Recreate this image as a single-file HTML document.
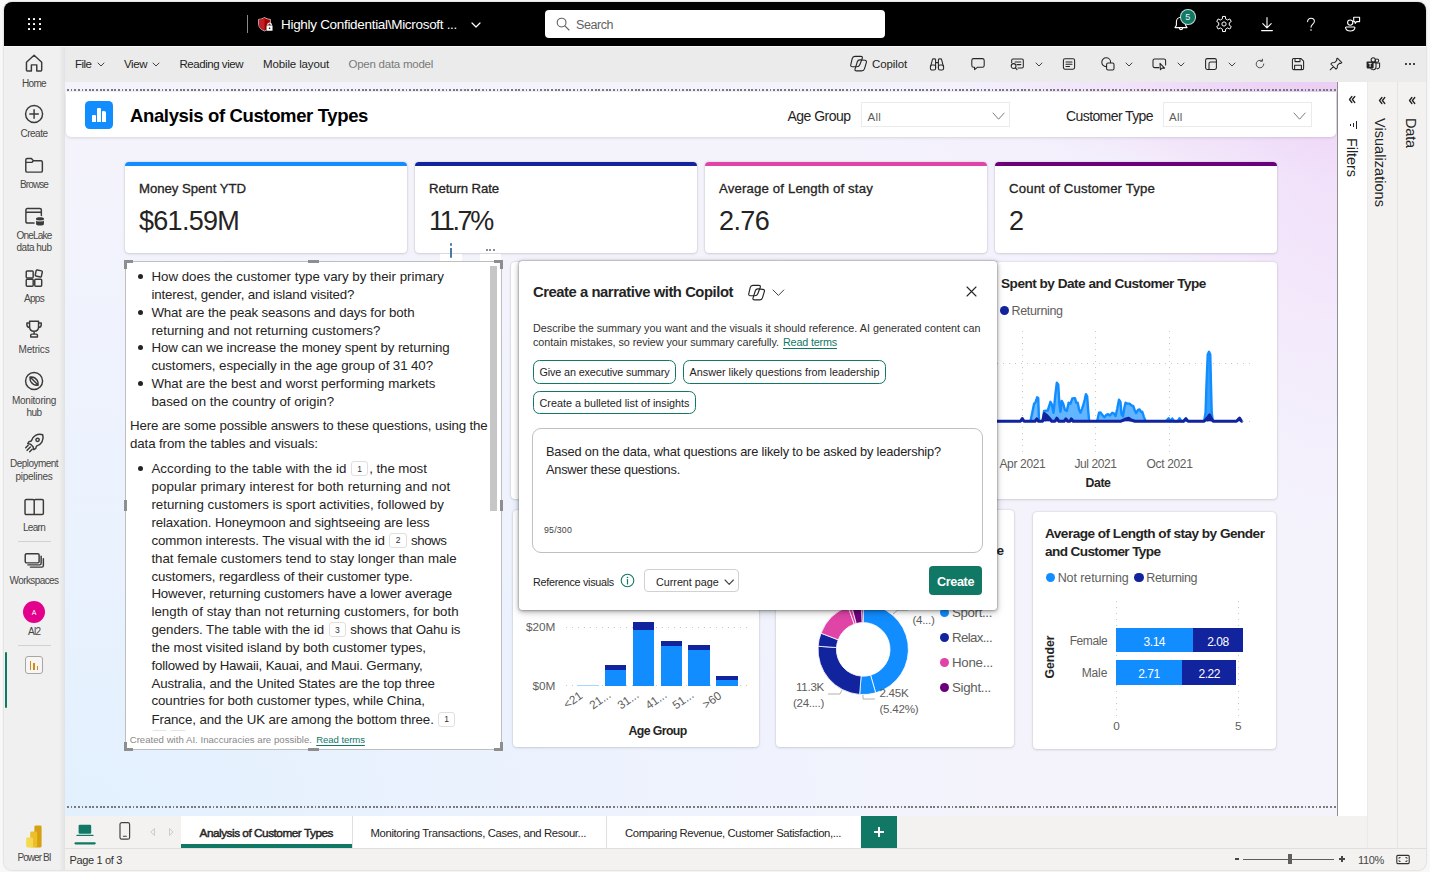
<!DOCTYPE html>
<html><head><meta charset="utf-8"><title>Power BI</title>
<style>
*{box-sizing:border-box;margin:0;padding:0}
html,body{width:1430px;height:872px;overflow:hidden;background:#f8f8f8;font-family:"Liberation Sans",sans-serif;color:#252423}
div,svg{position:absolute}
.t{white-space:nowrap;overflow:visible}
.card{background:#fff;border-radius:4px;box-shadow:0 0 2px rgba(0,0,0,.18),0 1px 3px rgba(0,0,0,.10)}
svg{overflow:visible}
.ic{fill:none;stroke:#242424;stroke-width:1.1;stroke-linecap:round;stroke-linejoin:round}
</style></head><body>
<div style="left:4.0px;top:2.0px;width:1422.3px;height:868.0px;background:#f3f2f1;border-radius:8px;box-shadow:0 0 2px rgba(0,0,0,.3)"></div>
<div style="left:4.0px;top:2.0px;width:1422.3px;height:44.0px;background:#000;border-radius:8px 8px 0 0"></div>
<div style="left:4.0px;top:46.0px;width:61.0px;height:824.0px;background:#f0f0f0;border-radius:0 0 0 8px"></div>
<div style="left:65.0px;top:46.0px;width:1361.3px;height:36.0px;background:#ebebeb;"></div>
<div style="left:59.0px;top:46.0px;width:6.0px;height:824.0px;background:linear-gradient(to right,rgba(0,0,0,0),rgba(0,0,0,.06));"></div>
<div style="left:65.0px;top:82.0px;width:1273.0px;height:734.0px;background:#f5f4fd;background:radial-gradient(ellipse 30% 13% at 100% 0%,rgba(234,205,244,.95) 0%,rgba(238,214,247,.5) 50%,rgba(245,244,253,0) 100%),radial-gradient(ellipse 17% 62% at 100% 0%,rgba(240,219,249,1) 0%,rgba(242,228,250,.65) 50%,rgba(245,244,253,0) 100%),radial-gradient(ellipse 40% 40% at 100% 0%,rgba(243,232,251,.8) 0%,rgba(245,244,253,0) 100%),radial-gradient(ellipse 75% 90% at 0% 100%,rgba(226,240,254,1) 0%,rgba(232,242,254,.8) 45%,rgba(245,244,253,0) 100%),#f4f3fc"></div>
<div style="left:4.0px;top:46.0px;width:1422.3px;height:1.0px;background:#fafafa;"></div>
<div style="left:67.0px;top:89.3px;width:1270.0px;height:1.8px;background:transparent;background-image:repeating-linear-gradient(to right,#7a7a7a 0,#7a7a7a 1.82px,transparent 1.82px,transparent 3.64px)"></div>
<div style="left:67.0px;top:806.4px;width:1270.0px;height:1.8px;background:transparent;background-image:repeating-linear-gradient(to right,#7a7a7a 0,#7a7a7a 1.82px,transparent 1.82px,transparent 3.64px)"></div>
<div style="left:1336.8px;top:82.0px;width:1.2px;height:734.0px;background:#8f8f8f;"></div>
<div style="left:1338.0px;top:82.0px;width:29.0px;height:734.0px;background:#fff;"></div>
<div style="left:1367.0px;top:82.0px;width:30.0px;height:766.0px;background:#f3f2f1;"></div>
<div style="left:1396.5px;top:82.0px;width:1.0px;height:766.0px;background:#e6e4e2;"></div>
<div style="left:1397.5px;top:82.0px;width:28.8px;height:766.0px;background:#f3f2f1;"></div>
<div style="left:1367.0px;top:82.0px;width:1.0px;height:766.0px;background:#eceae8;"></div>
<div style="left:65.0px;top:816.0px;width:1302.0px;height:32.0px;background:#f3f2f1;"></div>
<div style="left:65.0px;top:848.0px;width:1361.3px;height:1.0px;background:#e1dfdd;"></div>
<div style="left:65.0px;top:849.0px;width:1361.3px;height:21.0px;background:#f3f2f1;border-radius:0 0 8px 0"></div>
<div style="left:28.0px;top:17.6px;width:2.0px;height:2.0px;background:#fff;border-radius:.5px"></div>
<div style="left:28.0px;top:23.0px;width:2.0px;height:2.0px;background:#fff;border-radius:.5px"></div>
<div style="left:28.0px;top:28.4px;width:2.0px;height:2.0px;background:#fff;border-radius:.5px"></div>
<div style="left:33.4px;top:17.6px;width:2.0px;height:2.0px;background:#fff;border-radius:.5px"></div>
<div style="left:33.4px;top:23.0px;width:2.0px;height:2.0px;background:#fff;border-radius:.5px"></div>
<div style="left:33.4px;top:28.4px;width:2.0px;height:2.0px;background:#fff;border-radius:.5px"></div>
<div style="left:38.8px;top:17.6px;width:2.0px;height:2.0px;background:#fff;border-radius:.5px"></div>
<div style="left:38.8px;top:23.0px;width:2.0px;height:2.0px;background:#fff;border-radius:.5px"></div>
<div style="left:38.8px;top:28.4px;width:2.0px;height:2.0px;background:#fff;border-radius:.5px"></div>
<div style="left:247.0px;top:15.0px;width:1.0px;height:18.0px;background:#8a8a8a;"></div>
<svg style="left:258.00px;top:17.00px" width="15" height="15" viewBox="0 0 15 15" ><path d="M6.5 0.5 C4.5 1.7 2.6 2.3 0.6 2.4 V7 C0.6 10.3 2.9 12.7 6.5 13.9 C10.1 12.7 12.4 10.3 12.4 7 V2.4 C10.4 2.3 8.5 1.7 6.5 0.5Z" fill="#a80000" stroke="#f3f3f3" stroke-width=".7"/><path d="M6.5 0.9 C4.6 2 2.8 2.6 1 2.7 V7 C1 10 3.1 12.3 6.5 13.5 Z" fill="#c11f27"/><rect x="8.2" y="8.2" width="6.6" height="5.8" rx=".7" fill="#fff" stroke="#000" stroke-width=".5"/><path d="M9.9 8.6 V7.3 C9.9 5.6 13.3 5.6 13.3 7.3 V8.6" fill="none" stroke="#fff" stroke-width="1.1"/><circle cx="11.6" cy="11.2" r=".8" fill="#000"/></svg>
<div class="t" style="left:281.00px;top:15.50px;font-size:13.50px;line-height:18px;height:18px;letter-spacing:-0.305px;font-weight:400;color:#fff;">Highly Confidential\Microsoft ...</div>
<svg style="left:472.00px;top:23.30px" width="8" height="4" viewBox="0 0 8 4" ><path d="M0 0 L4 4 L8 0" fill="none" stroke="#fff" stroke-width="1.2" stroke-linecap="round" stroke-linejoin="round"/></svg>
<div style="left:545.0px;top:9.6px;width:340.0px;height:28.6px;background:#fff;border-radius:4px"></div>
<svg style="left:556.00px;top:17.00px" width="14" height="14" viewBox="0 0 14 14" ><circle cx="5.6" cy="5.6" r="4.4" fill="none" stroke="#616161" stroke-width="1.1"/><path d="M8.9 8.9 L13 13" stroke="#616161" stroke-width="1.1" stroke-linecap="round"/></svg>
<div class="t" style="left:576.00px;top:16.50px;font-size:12.50px;line-height:16px;height:16px;letter-spacing:-0.434px;font-weight:400;color:#616161;">Search</div>
<svg style="left:1172.00px;top:15.00px" width="18" height="18" viewBox="0 0 18 18" ><path d="M9 2.2 C6.2 2.2 4.4 4.3 4.4 6.9 V10.2 L3 12.6 H15 L13.6 10.2 V6.9 C13.6 4.3 11.8 2.2 9 2.2Z M7.2 12.8 C7.2 15.2 10.8 15.2 10.8 12.8" fill="none" stroke="#fff" stroke-width="1.1" stroke-linecap="round" stroke-linejoin="round"/></svg>
<div style="left:1180.0px;top:9.0px;width:15.6px;height:15.6px;background:#117865;border-radius:50%;border:1px solid rgba(255,255,255,.75)"></div>
<div class="t" style="left:1185.30px;top:11.00px;font-size:9.00px;line-height:12px;height:12px;letter-spacing:0.000px;font-weight:400;color:#e8f3ef;">5</div>
<svg style="left:1215.00px;top:15.30px" width="18" height="18" viewBox="0 0 18 18" ><path d="M7.40 3.84 L7.55 1.44 L10.45 1.44 L10.60 3.84 L12.67 5.04 L14.82 3.96 L16.28 6.48 L14.27 7.80 L14.27 10.20 L16.28 11.52 L14.82 14.04 L12.67 12.96 L10.60 14.16 L10.45 16.56 L7.55 16.56 L7.40 14.16 L5.33 12.96 L3.18 14.04 L1.72 11.52 L3.73 10.20 L3.73 7.80 L1.72 6.48 L3.18 3.96 L5.33 5.04Z" fill="none" stroke="#fff" stroke-width="1" stroke-linejoin="round"/><circle cx="9" cy="9" r="2.1" fill="none" stroke="#fff" stroke-width="1"/></svg>
<svg style="left:1258.00px;top:15.00px" width="18" height="18" viewBox="0 0 18 18" ><path d="M9 2.5 V12.5 M4.8 8.6 L9 12.8 L13.2 8.6 M3.6 15.6 H14.4" fill="none" stroke="#fff" stroke-width="1.1" stroke-linecap="round" stroke-linejoin="round"/></svg>
<svg style="left:1304.50px;top:17.00px" width="12" height="16" viewBox="0 0 12 16" ><path d="M2.6 4.6 C2.6 2.4 4.2 1.2 6 1.2 C7.9 1.2 9.4 2.4 9.4 4.3 C9.4 7 6 7.2 6 10.2" fill="none" stroke="#fff" stroke-width="1.05" stroke-linecap="round"/><circle cx="6" cy="13" r=".8" fill="#fff"/></svg>
<svg style="left:1344.00px;top:14.00px" width="22" height="20" viewBox="0 0 22 20" ><circle cx="6.2" cy="8.6" r="2.6" fill="none" stroke="#fff" stroke-width="1.1" stroke-linecap="round" stroke-linejoin="round"/><path d="M2.3 13 H10.2 C10.8 13 11 13.4 10.9 13.9 C10.5 15.8 9 17 6.3 17 C3.6 17 2 15.8 1.6 13.9 C1.5 13.4 1.7 13 2.3 13Z" fill="none" stroke="#fff" stroke-width="1.1" stroke-linecap="round" stroke-linejoin="round"/><path d="M9.7 3.2 H15.6 V7.6 H12.6 L11.2 9.4 L10.9 7.6 H9.7Z" fill="none" stroke="#fff" stroke-width="1.1" stroke-linecap="round" stroke-linejoin="round"/></svg>
<svg style="left:23.92px;top:52.92px" width="20.16" height="20.16" viewBox="0 0 18 18" ><path d="M2.2 8.2 L9 2 L15.8 8.2 V15.2 C15.8 15.7 15.5 16 15 16 H11.4 V10.6 H6.6 V16 H3 C2.5 16 2.2 15.7 2.2 15.2Z" fill="none" stroke="#3b3a39" stroke-width="1.3" stroke-linecap="round" stroke-linejoin="round"/></svg>
<div class="t" style="left:22.00px;top:76.80px;font-size:10.00px;line-height:13px;height:13px;letter-spacing:-0.668px;font-weight:400;color:#484644;">Home</div>
<svg style="left:23.92px;top:104.42px" width="20.16" height="20.16" viewBox="0 0 18 18" ><circle cx="9" cy="9" r="7.6" fill="none" stroke="#3b3a39" stroke-width="1.3" stroke-linecap="round" stroke-linejoin="round"/><path d="M9 5.2 V12.8 M5.2 9 H12.8" fill="none" stroke="#3b3a39" stroke-width="1.3" stroke-linecap="round" stroke-linejoin="round"/></svg>
<div class="t" style="left:20.50px;top:127.10px;font-size:10.00px;line-height:13px;height:13px;letter-spacing:-0.502px;font-weight:400;color:#484644;">Create</div>
<svg style="left:23.92px;top:155.42px" width="20.16" height="20.16" viewBox="0 0 18 18" ><path d="M1.6 4.4 C1.6 3.6 2.1 3.1 2.9 3.1 H6.6 L8.4 5.2 H15.1 C15.9 5.2 16.4 5.7 16.4 6.5 V14 C16.4 14.8 15.9 15.3 15.1 15.3 H2.9 C2.1 15.3 1.6 14.8 1.6 14Z M1.6 6.6 H7 L8.4 5.2" fill="none" stroke="#3b3a39" stroke-width="1.3" stroke-linecap="round" stroke-linejoin="round"/></svg>
<div class="t" style="left:20.00px;top:177.90px;font-size:10.00px;line-height:13px;height:13px;letter-spacing:-0.891px;font-weight:400;color:#484644;">Browse</div>
<svg style="left:23.80px;top:205.86px" width="22.4" height="21.28" viewBox="0 0 20 19" ><path d="M9 15.2 H3 C2.2 15.2 1.7 14.7 1.7 13.9 V3.6 C1.7 2.8 2.2 2.3 3 2.3 H14.2 C15 2.3 15.5 2.8 15.5 3.6 V8.4 M1.7 5.6 H15.5" fill="none" stroke="#3b3a39" stroke-width="1.3" stroke-linecap="round" stroke-linejoin="round"/><path d="M10.8 11 C10.8 9.6 17.8 9.6 17.8 11 V16.2 C17.8 17.7 10.8 17.7 10.8 16.2Z" fill="#3b3a39"/><path d="M10.8 12.6 C11.5 13.8 17.1 13.8 17.8 12.6" fill="none" stroke="#f0f0f0" stroke-width=".9"/></svg>
<div class="t" style="left:16.50px;top:228.70px;font-size:10.00px;line-height:13px;height:13px;letter-spacing:-0.798px;font-weight:400;color:#484644;">OneLake</div>
<div class="t" style="left:16.50px;top:241.30px;font-size:10.00px;line-height:13px;height:13px;letter-spacing:-0.490px;font-weight:400;color:#484644;">data hub</div>
<svg style="left:23.92px;top:268.92px" width="20.16" height="20.16" viewBox="0 0 18 18" ><rect x="2" y="9.2" width="6.2" height="6.2" rx=".8" fill="none" stroke="#3b3a39" stroke-width="1.3" stroke-linecap="round" stroke-linejoin="round"/><rect x="9.6" y="9.2" width="6.2" height="6.2" rx=".8" fill="none" stroke="#3b3a39" stroke-width="1.3" stroke-linecap="round" stroke-linejoin="round"/><rect x="2" y="1.8" width="6.2" height="6.2" rx=".8" fill="none" stroke="#3b3a39" stroke-width="1.3" stroke-linecap="round" stroke-linejoin="round"/><rect x="10.4" y="1.2" width="5.6" height="5.6" rx=".8" transform="rotate(12 13.2 4)" fill="none" stroke="#3b3a39" stroke-width="1.3" stroke-linecap="round" stroke-linejoin="round"/></svg>
<div class="t" style="left:24.00px;top:291.70px;font-size:10.00px;line-height:13px;height:13px;letter-spacing:-0.698px;font-weight:400;color:#484644;">Apps</div>
<svg style="left:23.92px;top:319.42px" width="20.16" height="20.16" viewBox="0 0 18 18" ><path d="M5 2 H13 V7 C13 9.6 11.4 11 9 11 C6.6 11 5 9.6 5 7Z M5 3.6 H2.6 V5.2 C2.6 6.8 3.6 7.6 5 7.6 M13 3.6 H15.4 V5.2 C15.4 6.8 14.4 7.6 13 7.6 M9 11 V13.4 M6 16 V14.6 C6 13.9 6.4 13.5 7.1 13.5 H10.9 C11.6 13.5 12 13.9 12 14.6 V16Z" fill="none" stroke="#3b3a39" stroke-width="1.3" stroke-linecap="round" stroke-linejoin="round"/></svg>
<div class="t" style="left:18.50px;top:342.80px;font-size:10.00px;line-height:13px;height:13px;letter-spacing:-0.174px;font-weight:400;color:#484644;">Metrics</div>
<svg style="left:23.92px;top:370.92px" width="20.16" height="20.16" viewBox="0 0 18 18" ><circle cx="9" cy="9" r="7.6" fill="none" stroke="#3b3a39" stroke-width="1.3" stroke-linecap="round" stroke-linejoin="round"/><path d="M5.4 5.4 C7.6 5 10.2 6 11.6 8 C12.6 9.6 12.8 11.4 12.6 12.6 C10.4 13 7.8 12 6.4 10 C5.4 8.4 5.2 6.6 5.4 5.4Z M5.4 5.4 L12.6 12.6" fill="none" stroke="#3b3a39" stroke-width="1.3" stroke-linecap="round" stroke-linejoin="round"/></svg>
<div class="t" style="left:12.00px;top:393.70px;font-size:10.00px;line-height:13px;height:13px;letter-spacing:-0.269px;font-weight:400;color:#484644;">Monitoring</div>
<div class="t" style="left:26.50px;top:406.10px;font-size:10.00px;line-height:13px;height:13px;letter-spacing:-0.561px;font-weight:400;color:#484644;">hub</div>
<svg style="left:22.80px;top:431.80px" width="22.4" height="22.4" viewBox="0 0 20 20" ><path d="M11.2 3 C13.4 1.8 16 1.9 17.6 2.4 C18.1 4 18.2 6.6 17 8.8 C16 10.6 14 12 12 12.6 L11.4 14.6 L9.6 15.8 L9 13.2 L6.8 11 L4.2 10.4 L5.4 8.6 L7.4 8 C8 6 9.4 4 11.2 3Z" fill="none" stroke="#3b3a39" stroke-width="1.3" stroke-linecap="round" stroke-linejoin="round"/><circle cx="13" cy="7" r="1.5" fill="none" stroke="#3b3a39" stroke-width="1.3" stroke-linecap="round" stroke-linejoin="round"/><path d="M6.6 13.4 L3.6 16.4 M4.6 11.8 L2.4 14 M8.2 15.4 L6 17.6" fill="none" stroke="#3b3a39" stroke-width="1.3" stroke-linecap="round" stroke-linejoin="round"/></svg>
<div class="t" style="left:10.00px;top:456.70px;font-size:10.00px;line-height:13px;height:13px;letter-spacing:-0.536px;font-weight:400;color:#484644;">Deployment</div>
<div class="t" style="left:15.50px;top:469.50px;font-size:10.00px;line-height:13px;height:13px;letter-spacing:-0.274px;font-weight:400;color:#484644;">pipelines</div>
<svg style="left:22.80px;top:497.42px" width="22.4" height="20.16" viewBox="0 0 20 18" ><path d="M10 3.4 V15.6 M1.8 3.4 C1.8 2.7 2.2 2.3 2.9 2.3 H8.9 C9.6 2.3 10 2.7 10 3.4 C10 2.7 10.4 2.3 11.1 2.3 H17.1 C17.8 2.3 18.2 2.7 18.2 3.4 V14.5 C18.2 15.2 17.8 15.6 17.1 15.6 H2.9 C2.2 15.6 1.8 15.2 1.8 14.5Z" fill="none" stroke="#3b3a39" stroke-width="1.3" stroke-linecap="round" stroke-linejoin="round"/></svg>
<div class="t" style="left:23.00px;top:520.90px;font-size:10.00px;line-height:13px;height:13px;letter-spacing:-0.715px;font-weight:400;color:#484644;">Learn</div>
<div style="left:18.0px;top:540.5px;width:33.0px;height:1.0px;background:#d2d0ce;"></div>
<svg style="left:22.80px;top:550.92px" width="22.4" height="20.16" viewBox="0 0 20 18" ><rect x="2" y="2.4" width="12.4" height="8.2" rx="1.2" fill="none" stroke="#3b3a39" stroke-width="1.3" stroke-linecap="round" stroke-linejoin="round"/><path d="M16.2 4.6 V11 C16.2 11.9 15.7 12.4 14.8 12.4 H4.4 M18.2 6.8 V13 C18.2 13.9 17.7 14.4 16.8 14.4 H6.6" fill="none" stroke="#3b3a39" stroke-width="1.3" stroke-linecap="round" stroke-linejoin="round"/></svg>
<div class="t" style="left:9.50px;top:573.70px;font-size:10.00px;line-height:13px;height:13px;letter-spacing:-0.583px;font-weight:400;color:#484644;">Workspaces</div>
<div style="left:23.0px;top:601.0px;width:22.0px;height:22.0px;background:#e3008c;border-radius:50%"></div>
<div class="t" style="left:31.67px;top:607.50px;font-size:7.00px;line-height:9px;height:9px;letter-spacing:0.000px;font-weight:400;color:#fff;">A</div>
<div class="t" style="left:28.00px;top:625.20px;font-size:10.00px;line-height:13px;height:13px;letter-spacing:-1.003px;font-weight:400;color:#484644;">AI2</div>
<div style="left:18.0px;top:644.7px;width:33.0px;height:1.0px;background:#d2d0ce;"></div>
<div style="left:5.0px;top:652.0px;width:2.0px;height:56.0px;background:#117865;border-radius:1px"></div>
<div style="left:25.0px;top:656.0px;width:18.0px;height:18.0px;background:#f7f6f5;border-radius:3px;border:1px solid #a8a6a4"></div>
<div style="left:29.6px;top:660.5px;width:1.6px;height:9.5px;background:#d08a17;"></div>
<div style="left:33.2px;top:663.0px;width:1.6px;height:7.0px;background:#d08a17;"></div>
<div style="left:36.8px;top:666.0px;width:1.4px;height:4.0px;background:#d08a17;"></div>
<svg style="left:24.50px;top:825.30px" width="20" height="24" viewBox="0 0 20 24" ><rect x="9.4" y="0.5" width="7.2" height="22" rx="1.4" fill="#d6a010"/><rect x="5.2" y="6.6" width="7" height="15.9" rx="1.4" fill="#ecbe2a"/><rect x="1.2" y="12.4" width="6.8" height="10.1" rx="1.4" fill="#f5d94e"/></svg>
<div class="t" style="left:17.50px;top:850.50px;font-size:10.00px;line-height:13px;height:13px;letter-spacing:-0.946px;font-weight:400;color:#484644;">Power BI</div>
<div class="t" style="left:75.00px;top:57.30px;font-size:11.50px;line-height:15px;height:15px;letter-spacing:-0.507px;font-weight:400;color:#242424;">File</div>
<svg style="left:98.00px;top:63.10px" width="6" height="3" viewBox="0 0 6 3" ><path d="M0 0 L3 3 L6 0" fill="none" stroke="#424242" stroke-width="1" stroke-linecap="round" stroke-linejoin="round"/></svg>
<div class="t" style="left:124.00px;top:57.30px;font-size:11.50px;line-height:15px;height:15px;letter-spacing:-0.429px;font-weight:400;color:#242424;">View</div>
<svg style="left:153.00px;top:63.10px" width="6" height="3" viewBox="0 0 6 3" ><path d="M0 0 L3 3 L6 0" fill="none" stroke="#424242" stroke-width="1" stroke-linecap="round" stroke-linejoin="round"/></svg>
<div class="t" style="left:179.50px;top:57.30px;font-size:11.50px;line-height:15px;height:15px;letter-spacing:-0.461px;font-weight:400;color:#242424;">Reading view</div>
<div class="t" style="left:263.00px;top:57.30px;font-size:11.50px;line-height:15px;height:15px;letter-spacing:-0.135px;font-weight:400;color:#242424;">Mobile layout</div>
<div class="t" style="left:348.50px;top:57.30px;font-size:11.50px;line-height:15px;height:15px;letter-spacing:-0.248px;font-weight:400;color:#7a7a7a;">Open data model</div>
<svg style="left:849.50px;top:56.30px" width="17.2" height="15.3" viewBox="0 0 17.2 15.3" ><path d="M2.21 2.54 Q2.70 0.40 4.90 0.40 L10.80 0.40 Q13.00 0.40 12.21 2.45 L9.79 8.75 Q9.00 10.80 6.80 10.80 L2.50 10.80 Q0.30 10.80 0.79 8.66Z" fill="none" stroke="#242424" stroke-width="1.1" stroke-linejoin="round"/><path d="M7.33 5.79 Q8.00 3.70 10.19 3.89 L14.81 4.31 Q17.00 4.50 16.35 6.60 L14.45 12.80 Q13.80 14.90 11.60 14.90 L6.60 14.90 Q4.40 14.90 5.07 12.81Z" fill="none" stroke="#242424" stroke-width="1.1" stroke-linejoin="round"/></svg>
<div class="t" style="left:872.00px;top:57.30px;font-size:11.50px;line-height:15px;height:15px;letter-spacing:-0.114px;font-weight:400;color:#242424;">Copilot</div>
<svg style="left:929.00px;top:56.00px" width="16" height="16" viewBox="0 0 16 16" ><path d="M3.4 3.6 C3.4 2.6 6.6 2.6 6.6 3.6 V12 M9.4 12 V3.6 C9.4 2.6 12.6 2.6 12.6 3.6 M3.4 3.6 L1.6 10.6 M12.6 3.6 L14.4 10.6 M6.6 6.6 H9.4" fill="none" stroke="#242424" stroke-width="1.05" stroke-linecap="round" stroke-linejoin="round"/><rect x="1.4" y="9" width="5.2" height="5" rx="1.6" fill="none" stroke="#242424" stroke-width="1.05" stroke-linecap="round" stroke-linejoin="round"/><rect x="9.4" y="9" width="5.2" height="5" rx="1.6" fill="none" stroke="#242424" stroke-width="1.05" stroke-linecap="round" stroke-linejoin="round"/></svg>
<svg style="left:970.00px;top:56.00px" width="16" height="16" viewBox="0 0 16 16" ><path d="M3.6 2.6 H12.4 C13.5 2.6 14.2 3.3 14.2 4.4 V9.4 C14.2 10.5 13.5 11.2 12.4 11.2 H7.6 L4.6 13.6 V11.2 H3.6 C2.5 11.2 1.8 10.5 1.8 9.4 V4.4 C1.8 3.3 2.5 2.6 3.6 2.6Z" fill="none" stroke="#242424" stroke-width="1.05" stroke-linecap="round" stroke-linejoin="round"/></svg>
<svg style="left:1009.00px;top:56.00px" width="16" height="16" viewBox="0 0 16 16" ><path d="M5 3 H13 C13.8 3 14.3 3.5 14.3 4.3 V10.7 C14.3 11.5 13.8 12 13 12 H9 M2.7 6.6 V4.3 C2.7 3.5 3.2 3 4 3 H5 M6 6 H11.8 M8 8.6 H11.8" fill="none" stroke="#242424" stroke-width="1.05" stroke-linecap="round" stroke-linejoin="round"/><circle cx="4.6" cy="10" r="2.4" fill="none" stroke="#242424" stroke-width="1.05" stroke-linecap="round" stroke-linejoin="round"/><path d="M6.4 11.8 L8 13.6" fill="none" stroke="#242424" stroke-width="1.05" stroke-linecap="round" stroke-linejoin="round"/></svg>
<svg style="left:1035.60px;top:63.30px" width="6" height="3" viewBox="0 0 6 3" ><path d="M0 0 L3 3 L6 0" fill="none" stroke="#424242" stroke-width="1" stroke-linecap="round" stroke-linejoin="round"/></svg>
<svg style="left:1060.50px;top:56.00px" width="16" height="16" viewBox="0 0 16 16" ><rect x="2.4" y="2.8" width="11.2" height="10.4" rx="1.6" fill="none" stroke="#242424" stroke-width="1.05" stroke-linecap="round" stroke-linejoin="round"/><path d="M5 6 H11 M5 8.2 H11 M5 10.4 H8.6" fill="none" stroke="#242424" stroke-width="1.05" stroke-linecap="round" stroke-linejoin="round"/></svg>
<svg style="left:1099.50px;top:56.00px" width="16" height="16" viewBox="0 0 16 16" ><circle cx="6.2" cy="6.2" r="4.4" fill="none" stroke="#242424" stroke-width="1.05" stroke-linecap="round" stroke-linejoin="round"/><rect x="6.6" y="7" width="7.4" height="7" rx="1.4" fill="#ebebeb" stroke="#242424" stroke-width="1.05"/></svg>
<svg style="left:1126.30px;top:63.30px" width="6" height="3" viewBox="0 0 6 3" ><path d="M0 0 L3 3 L6 0" fill="none" stroke="#424242" stroke-width="1" stroke-linecap="round" stroke-linejoin="round"/></svg>
<svg style="left:1151.00px;top:56.00px" width="17" height="16" viewBox="0 0 17 16" ><path d="M8 11.6 H3.6 C2.6 11.6 2 11 2 10 V4.6 C2 3.6 2.6 3 3.6 3 H13 C14 3 14.6 3.6 14.6 4.6 V9" fill="none" stroke="#242424" stroke-width="1.05" stroke-linecap="round" stroke-linejoin="round"/><path d="M9 7.4 L9.4 13.8 L11 12 L13.6 12.2Z" fill="none" stroke="#242424" stroke-width="1.05" stroke-linecap="round" stroke-linejoin="round"/></svg>
<svg style="left:1177.80px;top:63.30px" width="6" height="3" viewBox="0 0 6 3" ><path d="M0 0 L3 3 L6 0" fill="none" stroke="#424242" stroke-width="1" stroke-linecap="round" stroke-linejoin="round"/></svg>
<svg style="left:1203.00px;top:56.00px" width="16" height="16" viewBox="0 0 16 16" ><rect x="2.6" y="2.6" width="10.8" height="10.8" rx="1.6" fill="none" stroke="#242424" stroke-width="1.05" stroke-linecap="round" stroke-linejoin="round"/><path d="M6 13.4 V7.6 C6 6.6 6.6 6 7.6 6 H13.4" fill="none" stroke="#242424" stroke-width="1.05" stroke-linecap="round" stroke-linejoin="round"/></svg>
<svg style="left:1229.30px;top:63.30px" width="6" height="3" viewBox="0 0 6 3" ><path d="M0 0 L3 3 L6 0" fill="none" stroke="#424242" stroke-width="1" stroke-linecap="round" stroke-linejoin="round"/></svg>
<svg style="left:1254.00px;top:58.00px" width="12" height="12" viewBox="0 0 12 12" ><path d="M9.8 6 A3.8 3.8 0 1 1 8 2.8 M8.4 1.2 V3.2 H6.4" fill="none" stroke="#4a4a4a" stroke-width="1" stroke-linecap="round" stroke-linejoin="round"/></svg>
<svg style="left:1289.50px;top:56.00px" width="16" height="16" viewBox="0 0 16 16" ><path d="M3.8 2.4 H10.8 L13.6 5.2 V12.2 C13.6 13.1 13.1 13.6 12.2 13.6 H3.8 C2.9 13.6 2.4 13.1 2.4 12.2 V3.8 C2.4 2.9 2.9 2.4 3.8 2.4Z M5 2.6 V5.6 H10 V2.6 M4.6 13.4 V9.2 H11.4 V13.4" fill="none" stroke="#242424" stroke-width="1.05" stroke-linecap="round" stroke-linejoin="round"/></svg>
<svg style="left:1328.00px;top:56.00px" width="16" height="16" viewBox="0 0 16 16" ><path d="M9.4 2.2 L13.8 6.6 L12.8 7.4 L11.6 7.2 L9.4 9.4 L9.2 12 L8 13.2 L2.8 8 L4 6.8 L6.6 6.6 L8.8 4.4 L8.6 3.2Z M5.4 10.6 L2.2 13.8" fill="none" stroke="#242424" stroke-width="1.05" stroke-linecap="round" stroke-linejoin="round"/></svg>
<svg style="left:1365.00px;top:56.00px" width="17" height="16" viewBox="0 0 17 16" ><circle cx="12" cy="4.6" r="1.7" fill="none" stroke="#242424" stroke-width="1.05" stroke-linecap="round" stroke-linejoin="round"/><circle cx="8.2" cy="3.8" r="2.1" fill="none" stroke="#242424" stroke-width="1.05" stroke-linecap="round" stroke-linejoin="round"/><path d="M10.6 7 H14.6 V10.6 C14.6 12.4 13 13 12 12.6 M6 6.6 H11 V11 C11 14.4 6 14.4 5.6 12" fill="none" stroke="#242424" stroke-width="1.05" stroke-linecap="round" stroke-linejoin="round"/><rect x="1.6" y="5.4" width="7" height="7" rx=".8" fill="#242424"/><path d="M3.6 7.4 H6.6 M5.1 7.4 V11" stroke="#ebebeb" stroke-width="1" fill="none"/></svg>
<div style="left:1405.0px;top:63.4px;width:1.6px;height:1.6px;background:#242424;border-radius:50%"></div>
<div style="left:1409.2px;top:63.4px;width:1.6px;height:1.6px;background:#242424;border-radius:50%"></div>
<div style="left:1413.4px;top:63.4px;width:1.6px;height:1.6px;background:#242424;border-radius:50%"></div>
<div style="left:66.0px;top:92.0px;width:1270.0px;height:45.0px;background:#fff;border-radius:0 0 5px 5px;box-shadow:0 1px 3px rgba(0,0,0,.12)"></div>
<div style="left:85.0px;top:101.0px;width:28.0px;height:28.0px;background:#118dff;border-radius:4.5px"></div>
<div style="left:92.2px;top:114.5px;width:4.0px;height:7.5px;background:#fff;border-radius:1px 1px 0 0"></div>
<div style="left:97.2px;top:108.3px;width:4.0px;height:13.7px;background:#fff;border-radius:1px 1px 0 0"></div>
<div style="left:102.2px;top:111.3px;width:4.0px;height:10.7px;background:#fff;border-radius:1px 2px 0 0"></div>
<div class="t" style="left:130.00px;top:104.40px;font-size:18.50px;line-height:24px;height:24px;letter-spacing:-0.362px;font-weight:700;color:#000;">Analysis of Customer Types</div>
<div class="t" style="left:787.50px;top:107.40px;font-size:14.00px;line-height:18px;height:18px;letter-spacing:-0.523px;font-weight:400;color:#252423;">Age Group</div>
<div style="left:861.2px;top:102.2px;width:148.8px;height:25.2px;background:#fff;border:1px solid #ebebeb"></div>
<div class="t" style="left:867.50px;top:109.80px;font-size:11.50px;line-height:15px;height:15px;letter-spacing:0.240px;font-weight:400;color:#605e5c;">All</div>
<svg style="left:992.80px;top:113.30px" width="11.2" height="6.2" viewBox="0 0 11.2 6.2" ><path d="M0 0 L5.6 6.2 L11.2 0" fill="none" stroke="#7a7a7a" stroke-width="1" stroke-linecap="round" stroke-linejoin="round"/></svg>
<div class="t" style="left:1066.00px;top:107.40px;font-size:14.00px;line-height:18px;height:18px;letter-spacing:-0.590px;font-weight:400;color:#252423;">Customer Type</div>
<div style="left:1162.8px;top:102.2px;width:148.8px;height:25.2px;background:#fff;border:1px solid #ebebeb"></div>
<div class="t" style="left:1169.00px;top:109.80px;font-size:11.50px;line-height:15px;height:15px;letter-spacing:0.240px;font-weight:400;color:#605e5c;">All</div>
<svg style="left:1293.60px;top:113.30px" width="11.2" height="6.2" viewBox="0 0 11.2 6.2" ><path d="M0 0 L5.6 6.2 L11.2 0" fill="none" stroke="#7a7a7a" stroke-width="1" stroke-linecap="round" stroke-linejoin="round"/></svg>
<div class="card" style="left:125px;top:162px;width:282px;height:91.3px;overflow:hidden;border-radius:4px"><div style="left:0;top:0;width:282px;height:3.5px;background:#118dff"></div></div>
<div class="t" style="left:139.00px;top:179.80px;font-size:13.20px;line-height:17px;height:17px;letter-spacing:-0.040px;font-weight:400;color:#252423;-webkit-text-stroke:.3px #252423">Money Spent YTD</div>
<div class="t" style="left:139.00px;top:203.70px;font-size:27.00px;line-height:34px;height:34px;letter-spacing:-0.723px;font-weight:400;color:#252423;">$61.59M</div>
<div class="card" style="left:415px;top:162px;width:282px;height:91.3px;overflow:hidden;border-radius:4px"><div style="left:0;top:0;width:282px;height:3.5px;background:#12239e"></div></div>
<div class="t" style="left:429.00px;top:179.80px;font-size:13.20px;line-height:17px;height:17px;letter-spacing:-0.106px;font-weight:400;color:#252423;-webkit-text-stroke:.3px #252423">Return Rate</div>
<div class="t" style="left:429.00px;top:203.70px;font-size:27.00px;line-height:34px;height:34px;letter-spacing:-2.310px;font-weight:400;color:#252423;">11.7%</div>
<div class="card" style="left:705px;top:162px;width:282px;height:91.3px;overflow:hidden;border-radius:4px"><div style="left:0;top:0;width:282px;height:3.5px;background:#e044a7"></div></div>
<div class="t" style="left:719.00px;top:179.80px;font-size:13.20px;line-height:17px;height:17px;letter-spacing:0.153px;font-weight:400;color:#252423;-webkit-text-stroke:.3px #252423">Average of Length of stay</div>
<div class="t" style="left:719.00px;top:203.70px;font-size:27.00px;line-height:34px;height:34px;letter-spacing:-0.636px;font-weight:400;color:#252423;">2.76</div>
<div class="card" style="left:995px;top:162px;width:282px;height:91.3px;overflow:hidden;border-radius:4px"><div style="left:0;top:0;width:282px;height:3.5px;background:#6b007b"></div></div>
<div class="t" style="left:1009.00px;top:179.80px;font-size:13.20px;line-height:17px;height:17px;letter-spacing:0.145px;font-weight:400;color:#252423;-webkit-text-stroke:.3px #252423">Count of Customer Type</div>
<div class="t" style="left:1009.00px;top:203.70px;font-size:27.00px;line-height:34px;height:34px;letter-spacing:0.000px;font-weight:400;color:#252423;">2</div>
<div class="card" style="left:510.5px;top:261.5px;width:264.5px;height:237.5px"></div>
<div class="card" style="left:783px;top:262px;width:494px;height:237px"></div>
<div class="t" style="left:1001.00px;top:275.20px;font-size:13.60px;line-height:18px;height:18px;letter-spacing:-0.497px;font-weight:700;color:#252423;">Spent by Date and Customer Type</div>
<div style="left:999.8px;top:306.0px;width:9.0px;height:9.0px;background:#12239e;border-radius:50%"></div>
<div class="t" style="left:1011.60px;top:303.00px;font-size:12.50px;line-height:16px;height:16px;letter-spacing:-0.355px;font-weight:400;color:#605e5c;">Returning</div>
<div style="left:1021.9px;top:331.0px;width:1.0px;height:123.0px;background:transparent;background-image:repeating-linear-gradient(to bottom,#c8c6c4 0,#c8c6c4 1px,transparent 1px,transparent 6px)"></div>
<div style="left:1095.0px;top:331.0px;width:1.0px;height:123.0px;background:transparent;background-image:repeating-linear-gradient(to bottom,#c8c6c4 0,#c8c6c4 1px,transparent 1px,transparent 6px)"></div>
<div style="left:1169.0px;top:331.0px;width:1.0px;height:123.0px;background:transparent;background-image:repeating-linear-gradient(to bottom,#c8c6c4 0,#c8c6c4 1px,transparent 1px,transparent 6px)"></div>
<div style="left:997.0px;top:362.7px;width:253.5px;height:1.0px;background:transparent;background-image:repeating-linear-gradient(to right,#c8c6c4 0,#c8c6c4 1px,transparent 1px,transparent 6px)"></div>
<div style="left:997.0px;top:421.2px;width:253.5px;height:1.0px;background:transparent;background-image:repeating-linear-gradient(to right,#c8c6c4 0,#c8c6c4 1px,transparent 1px,transparent 6px)"></div>
<svg style="left:0.00px;top:0.00px" width="1430" height="872" viewBox="0 0 1430 872" ><path d="M1030.45 421.27 L1032.27 412.73 L1034.09 403.64 L1035.36 402.73 L1037.18 397.27 L1038.27 398.18 L1039.00 421.27" fill="#118dff" fill-opacity="0.6" stroke="#118dff" stroke-width="2.4" stroke-linejoin="round"/><path d="M1042.64 421.27 L1044.09 410.91 L1047.73 410.55 L1050.45 401.82 L1051.73 404.00 L1053.55 412.73 L1055.36 394.55 L1056.82 382.73 L1058.27 384.55 L1059.36 403.64 L1060.45 411.82 L1061.73 400.91 L1063.18 403.64 L1065.00 410.00 L1066.82 410.91 L1068.64 402.73 L1070.45 403.64 L1072.27 398.55 L1075.00 398.18 L1076.27 402.73 L1077.73 402.73 L1079.18 410.00 L1080.45 412.73 L1081.91 409.09 L1083.18 405.45 L1084.64 400.00 L1085.91 394.18 L1087.18 396.36 L1088.09 409.09 L1089.18 421.27" fill="#118dff" fill-opacity="0.65" stroke="#118dff" stroke-width="2.4" stroke-linejoin="round"/><path d="M1097.18 421.27 L1099.00 412.73 L1100.45 412.36 L1102.64 415.45 L1104.45 417.27 L1106.27 414.91 L1108.09 414.18 L1109.91 415.45 L1112.27 412.73 L1114.09 413.64 L1115.55 416.00 L1117.18 409.09 L1119.00 399.64 L1120.45 401.82 L1121.55 414.55 L1123.00 416.36 L1124.45 407.27 L1125.55 402.73 L1127.36 403.64 L1129.55 403.64 L1131.36 405.45 L1133.18 405.82 L1134.64 410.00 L1136.09 413.09 L1137.91 410.00 L1139.55 409.45 L1141.00 411.82 L1142.27 411.82 L1143.73 416.36 L1145.55 421.27" fill="#118dff" fill-opacity="0.65" stroke="#118dff" stroke-width="2.4" stroke-linejoin="round"/><path d="M1165.91 421.27 L1168.64 418.18 L1170.45 421.27 L1172.27 418.55 L1174.09 421.27 L1177.73 421.27 L1179.55 418.18 L1181.36 421.27 L1184.09 421.27 L1185.91 418.18 L1187.73 421.27" fill="#118dff" fill-opacity="0.3" stroke="#118dff" stroke-width="2.4" stroke-linejoin="round"/><path d="M1204.09 421.27 L1205.55 412.73 L1206.45 385.45 L1207.73 354.55 L1209.00 351.82 L1210.27 354.55 L1211.00 385.45 L1211.73 412.73 L1212.82 421.27" fill="#118dff" fill-opacity="0.85" stroke="#118dff" stroke-width="2.4" stroke-linejoin="round"/></svg>
<svg style="left:0.00px;top:0.00px" width="1430" height="872" viewBox="0 0 1430 872" ><path d="M996.82 421.27 L1020.45 421.27 L1022.27 418.55 L1024.09 421.27 L1035.00 421.27 L1036.82 418.91 L1038.64 421.27 L1042.64 421.27 L1044.45 413.64 L1046.82 415.45 L1049.55 418.55 L1051.73 421.27 L1055.00 421.27 L1056.82 418.18 L1059.00 421.27 L1064.09 421.27 L1065.91 418.91 L1067.73 421.27 L1069.91 421.27 L1071.36 418.91 L1073.18 421.27 L1120.45 421.27 L1125.00 419.27 L1128.64 418.18 L1131.00 420.00 L1135.00 421.27 L1183.18 421.27 L1185.91 418.91 L1188.09 421.27 L1204.09 421.27 L1206.82 418.55 L1209.55 414.91 L1211.36 418.55 L1213.18 421.27 L1236.45 421.27 L1239.55 418.18 L1241.55 421.27 L1242.64 421.27" fill="#12239e" stroke="#12239e" stroke-width="3" stroke-linejoin="round"/></svg>
<div class="t" style="left:999.40px;top:456.00px;font-size:12.00px;line-height:16px;height:16px;letter-spacing:-0.337px;font-weight:400;color:#605e5c;">Apr 2021</div>
<div class="t" style="left:1074.50px;top:456.00px;font-size:12.00px;line-height:16px;height:16px;letter-spacing:-0.421px;font-weight:400;color:#605e5c;">Jul 2021</div>
<div class="t" style="left:1146.50px;top:456.00px;font-size:12.00px;line-height:16px;height:16px;letter-spacing:-0.337px;font-weight:400;color:#605e5c;">Oct 2021</div>
<div class="t" style="left:1085.50px;top:474.50px;font-size:12.30px;line-height:16px;height:16px;letter-spacing:-0.415px;font-weight:700;color:#252423;">Date</div>
<div class="card" style="left:512.5px;top:509.7px;width:246.6px;height:237.5px"></div>
<div class="t" style="left:525.90px;top:620.30px;font-size:11.80px;line-height:15px;height:15px;letter-spacing:-0.004px;font-weight:400;color:#605e5c;">$20M</div>
<div class="t" style="left:532.40px;top:678.70px;font-size:11.80px;line-height:15px;height:15px;letter-spacing:0.016px;font-weight:400;color:#605e5c;">$0M</div>
<div style="left:565.6px;top:626.9px;width:182.4px;height:1.0px;background:transparent;background-image:repeating-linear-gradient(to right,#c8c6c4 0,#c8c6c4 1px,transparent 1px,transparent 6px)"></div>
<div style="left:565.6px;top:685.3px;width:182.4px;height:1.0px;background:transparent;background-image:repeating-linear-gradient(to right,#c8c6c4 0,#c8c6c4 1px,transparent 1px,transparent 6px)"></div>
<div style="left:577.3px;top:685.0px;width:21.6px;height:1.0px;background:#a9d4ff;"></div>
<div style="left:605.1px;top:665.0px;width:21.2px;height:4.7px;background:#12239e;"></div>
<div style="left:605.1px;top:669.7px;width:21.2px;height:16.3px;background:#118dff;"></div>
<div style="left:633.0px;top:621.9px;width:21.1px;height:7.9px;background:#12239e;"></div>
<div style="left:633.0px;top:629.8px;width:21.1px;height:56.2px;background:#118dff;"></div>
<div style="left:660.6px;top:640.7px;width:21.5px;height:5.5px;background:#12239e;"></div>
<div style="left:660.6px;top:646.2px;width:21.5px;height:39.8px;background:#118dff;"></div>
<div style="left:688.4px;top:645.0px;width:21.5px;height:4.5px;background:#12239e;"></div>
<div style="left:688.4px;top:649.5px;width:21.5px;height:36.5px;background:#118dff;"></div>
<div style="left:716.2px;top:676.4px;width:21.7px;height:3.9px;background:#12239e;"></div>
<div style="left:716.2px;top:680.3px;width:21.7px;height:5.7px;background:#118dff;"></div>
<div class="t" style="left:573.0px;top:693.2px;font-size:11.8px;line-height:14px;color:#605e5c;transform:rotate(-35deg);transform-origin:center;width:30px;margin-left:-15px;text-align:center">&lt;21</div>
<div class="t" style="left:600.0px;top:693.2px;font-size:11.8px;line-height:14px;color:#605e5c;transform:rotate(-35deg);transform-origin:center;width:30px;margin-left:-15px;text-align:center">21...</div>
<div class="t" style="left:627.5px;top:693.2px;font-size:11.8px;line-height:14px;color:#605e5c;transform:rotate(-35deg);transform-origin:center;width:30px;margin-left:-15px;text-align:center">31...</div>
<div class="t" style="left:655.5px;top:693.2px;font-size:11.8px;line-height:14px;color:#605e5c;transform:rotate(-35deg);transform-origin:center;width:30px;margin-left:-15px;text-align:center">41...</div>
<div class="t" style="left:683.0px;top:693.2px;font-size:11.8px;line-height:14px;color:#605e5c;transform:rotate(-35deg);transform-origin:center;width:30px;margin-left:-15px;text-align:center">51...</div>
<div class="t" style="left:711.5px;top:693.2px;font-size:11.8px;line-height:14px;color:#605e5c;transform:rotate(-35deg);transform-origin:center;width:30px;margin-left:-15px;text-align:center">&gt;60</div>
<div class="t" style="left:628.60px;top:723.00px;font-size:12.30px;line-height:16px;height:16px;letter-spacing:-0.616px;font-weight:700;color:#252423;">Age Group</div>
<div class="card" style="left:776px;top:510.3px;width:238.3px;height:237px"></div>
<div class="t" style="left:996.50px;top:541.80px;font-size:13.60px;line-height:18px;height:18px;letter-spacing:0.000px;font-weight:700;color:#252423;">e</div>
<svg style="left:0.00px;top:0.00px" width="1430" height="872" viewBox="0 0 1430 872" ><path d="M863.20 604.20 A45.2 45.2 0 0 1 875.66 692.85 L870.59 675.16 A26.8 26.8 0 0 0 863.20 622.60 Z" fill="#118dff" stroke="#fff" stroke-width=".8"/><path d="M875.66 692.85 A45.2 45.2 0 0 1 859.65 694.46 L861.10 676.12 A26.8 26.8 0 0 0 870.59 675.16 Z" fill="#118dff" stroke="#fff" stroke-width=".8"/><path d="M859.65 694.46 A45.2 45.2 0 0 1 818.11 646.25 L836.47 647.53 A26.8 26.8 0 0 0 861.10 676.12 Z" fill="#12239e" stroke="#fff" stroke-width=".8"/><path d="M818.11 646.25 A45.2 45.2 0 0 1 821.00 633.20 L838.18 639.80 A26.8 26.8 0 0 0 836.47 647.53 Z" fill="#12239e" stroke="#fff" stroke-width=".8"/><path d="M821.00 633.20 A45.2 45.2 0 0 1 848.11 606.79 L854.25 624.14 A26.8 26.8 0 0 0 838.18 639.80 Z" fill="#e044a7" stroke="#fff" stroke-width=".8"/><path d="M848.11 606.79 A45.2 45.2 0 0 1 851.50 605.74 L856.26 623.51 A26.8 26.8 0 0 0 854.25 624.14 Z" fill="#e044a7" stroke="#fff" stroke-width=".8"/><path d="M851.50 605.74 A45.2 45.2 0 0 1 861.62 604.23 L862.26 622.62 A26.8 26.8 0 0 0 856.26 623.51 Z" fill="#6b007b" stroke="#fff" stroke-width=".8"/><path d="M861.62 604.23 A45.2 45.2 0 0 1 863.20 604.20 L863.20 622.60 A26.8 26.8 0 0 0 862.26 622.62 Z" fill="#6b007b" stroke="#fff" stroke-width=".8"/></svg>
<svg style="left:0.00px;top:0.00px" width="1430" height="872" viewBox="0 0 1430 872" ><path d="M828 694 H840 L842 690" fill="none" stroke="#b3b0ad" stroke-width="1"/><path d="M863 695 V699 H875" fill="none" stroke="#b3b0ad" stroke-width="1"/><path d="M893 614 L898 610 H908" fill="none" stroke="#b3b0ad" stroke-width="1"/></svg>
<div class="t" style="left:796.00px;top:679.20px;font-size:11.60px;line-height:15px;height:15px;letter-spacing:-0.290px;font-weight:400;color:#605e5c;">11.3K</div>
<div class="t" style="left:793.00px;top:694.70px;font-size:11.60px;line-height:15px;height:15px;letter-spacing:-0.315px;font-weight:400;color:#605e5c;">(24....)</div>
<div class="t" style="left:879.40px;top:684.90px;font-size:11.60px;line-height:15px;height:15px;letter-spacing:-0.262px;font-weight:400;color:#605e5c;">2.45K</div>
<div class="t" style="left:879.40px;top:700.60px;font-size:11.60px;line-height:15px;height:15px;letter-spacing:-0.231px;font-weight:400;color:#605e5c;">(5.42%)</div>
<div class="t" style="left:912.50px;top:612.30px;font-size:11.60px;line-height:15px;height:15px;letter-spacing:-0.307px;font-weight:400;color:#605e5c;">(4...)</div>
<div style="left:940.0px;top:608.1px;width:9.2px;height:9.2px;background:#118dff;border-radius:50%"></div>
<div class="t" style="left:952.00px;top:604.00px;font-size:13.30px;line-height:17px;height:17px;letter-spacing:-0.359px;font-weight:400;color:#605e5c;">Sport...</div>
<div style="left:940.0px;top:633.0px;width:9.2px;height:9.2px;background:#12239e;border-radius:50%"></div>
<div class="t" style="left:952.00px;top:628.90px;font-size:13.30px;line-height:17px;height:17px;letter-spacing:-0.636px;font-weight:400;color:#605e5c;">Relax...</div>
<div style="left:940.0px;top:657.9px;width:9.2px;height:9.2px;background:#e044a7;border-radius:50%"></div>
<div class="t" style="left:952.00px;top:653.80px;font-size:13.30px;line-height:17px;height:17px;letter-spacing:-0.268px;font-weight:400;color:#605e5c;">Hone...</div>
<div style="left:940.0px;top:683.2px;width:9.2px;height:9.2px;background:#6b007b;border-radius:50%"></div>
<div class="t" style="left:952.00px;top:679.10px;font-size:13.30px;line-height:17px;height:17px;letter-spacing:-0.300px;font-weight:400;color:#605e5c;">Sight...</div>
<div class="card" style="left:1033px;top:511.5px;width:243px;height:237px"></div>
<div class="t" style="left:1045.00px;top:524.80px;font-size:13.60px;line-height:18px;height:18px;letter-spacing:-0.515px;font-weight:700;color:#252423;">Average of Length of stay by Gender</div>
<div class="t" style="left:1045.00px;top:542.80px;font-size:13.60px;line-height:18px;height:18px;letter-spacing:-0.614px;font-weight:700;color:#252423;">and Customer Type</div>
<div style="left:1045.6px;top:573.0px;width:9.2px;height:9.2px;background:#118dff;border-radius:50%"></div>
<div class="t" style="left:1057.70px;top:570.00px;font-size:12.50px;line-height:16px;height:16px;letter-spacing:-0.096px;font-weight:400;color:#605e5c;">Not returning</div>
<div style="left:1134.4px;top:573.0px;width:9.2px;height:9.2px;background:#12239e;border-radius:50%"></div>
<div class="t" style="left:1146.30px;top:570.00px;font-size:12.50px;line-height:16px;height:16px;letter-spacing:-0.388px;font-weight:400;color:#605e5c;">Returning</div>
<div style="left:1116.0px;top:601.4px;width:1.0px;height:115.6px;background:transparent;background-image:repeating-linear-gradient(to bottom,#c8c6c4 0,#c8c6c4 1px,transparent 1px,transparent 6px)"></div>
<div style="left:1237.9px;top:601.4px;width:1.0px;height:115.6px;background:transparent;background-image:repeating-linear-gradient(to bottom,#c8c6c4 0,#c8c6c4 1px,transparent 1px,transparent 6px)"></div>
<div style="left:1116.2px;top:628.2px;width:76.6px;height:24.0px;background:#118dff;"></div>
<div style="left:1192.8px;top:628.2px;width:50.4px;height:24.0px;background:#12239e;"></div>
<div style="left:1116.2px;top:660.2px;width:66.2px;height:24.8px;background:#118dff;"></div>
<div style="left:1182.4px;top:660.2px;width:53.6px;height:24.8px;background:#12239e;"></div>
<div class="t" style="left:1143.55px;top:633.70px;font-size:12.00px;line-height:16px;height:16px;letter-spacing:-0.463px;font-weight:400;color:#fff;">3.14</div>
<div class="t" style="left:1207.15px;top:633.70px;font-size:12.00px;line-height:16px;height:16px;letter-spacing:-0.463px;font-weight:400;color:#fff;">2.08</div>
<div class="t" style="left:1138.25px;top:665.80px;font-size:12.00px;line-height:16px;height:16px;letter-spacing:-0.463px;font-weight:400;color:#fff;">2.71</div>
<div class="t" style="left:1198.45px;top:665.80px;font-size:12.00px;line-height:16px;height:16px;letter-spacing:-0.463px;font-weight:400;color:#fff;">2.22</div>
<div class="t" style="left:1069.70px;top:633.20px;font-size:12.00px;line-height:16px;height:16px;letter-spacing:-0.418px;font-weight:400;color:#605e5c;">Female</div>
<div class="t" style="left:1081.70px;top:665.30px;font-size:12.00px;line-height:16px;height:16px;letter-spacing:-0.127px;font-weight:400;color:#605e5c;">Male</div>
<div class="t" style="left:1049.6px;top:656.6px;font-size:12.3px;line-height:14px;font-weight:700;color:#252423;transform:translate(-50%,-50%) rotate(-90deg)">Gender</div>
<div class="t" style="left:1113.22px;top:719.30px;font-size:11.80px;line-height:15px;height:15px;letter-spacing:0.000px;font-weight:400;color:#605e5c;">0</div>
<div class="t" style="left:1235.12px;top:719.30px;font-size:11.80px;line-height:15px;height:15px;letter-spacing:0.000px;font-weight:400;color:#605e5c;">5</div>
<div style="left:440.0px;top:253.5px;width:21.8px;height:7.5px;background:#fff;"></div>
<div style="left:449.6px;top:243.2px;width:2.4px;height:2.4px;background:#4a7ba7;border-radius:50%"></div>
<div style="left:449.8px;top:248.2px;width:2.1px;height:9.4px;background:#4a7ba7;border-radius:0 0 1px 1px"></div>
<div style="left:480.0px;top:253.5px;width:21.2px;height:7.5px;background:#fff;"></div>
<div style="left:485.6px;top:249.4px;width:2.1px;height:2.1px;background:#666;border-radius:50%"></div>
<div style="left:489.4px;top:249.4px;width:2.1px;height:2.1px;background:#666;border-radius:50%"></div>
<div style="left:493.3px;top:249.4px;width:2.1px;height:2.1px;background:#666;border-radius:50%"></div>
<div style="left:124.8px;top:260.6px;width:376.8px;height:489.4px;background:#fff;border:1px solid #bebebe"></div>
<div style="left:490.0px;top:266.0px;width:7.2px;height:245.4px;background:#c6c6c6;"></div>
<div style="left:138.2px;top:273.7px;width:5.0px;height:5.0px;background:#252423;border-radius:50%"></div>
<div class="t" style="left:151.40px;top:268.00px;font-size:13.30px;line-height:18px;height:18px;letter-spacing:-0.002px;font-weight:400;color:#252423;">How does the customer type vary by their primary</div>
<div class="t" style="left:151.40px;top:285.70px;font-size:13.30px;line-height:18px;height:18px;letter-spacing:-0.151px;font-weight:400;color:#252423;">interest, gender, and island visited?</div>
<div style="left:138.2px;top:309.5px;width:5.0px;height:5.0px;background:#252423;border-radius:50%"></div>
<div class="t" style="left:151.40px;top:303.80px;font-size:13.30px;line-height:18px;height:18px;letter-spacing:-0.122px;font-weight:400;color:#252423;">What are the peak seasons and days for both</div>
<div class="t" style="left:151.40px;top:321.50px;font-size:13.30px;line-height:18px;height:18px;letter-spacing:-0.004px;font-weight:400;color:#252423;">returning and not returning customers?</div>
<div style="left:138.2px;top:345.1px;width:5.0px;height:5.0px;background:#252423;border-radius:50%"></div>
<div class="t" style="left:151.40px;top:339.40px;font-size:13.30px;line-height:18px;height:18px;letter-spacing:-0.084px;font-weight:400;color:#252423;">How can we increase the money spent by returning</div>
<div class="t" style="left:151.40px;top:357.40px;font-size:13.30px;line-height:18px;height:18px;letter-spacing:-0.094px;font-weight:400;color:#252423;">customers, especially in the age group of 31 40?</div>
<div style="left:138.2px;top:381.0px;width:5.0px;height:5.0px;background:#252423;border-radius:50%"></div>
<div class="t" style="left:151.40px;top:375.30px;font-size:13.30px;line-height:18px;height:18px;letter-spacing:-0.012px;font-weight:400;color:#252423;">What are the best and worst performing markets</div>
<div class="t" style="left:151.40px;top:393.10px;font-size:13.30px;line-height:18px;height:18px;letter-spacing:0.006px;font-weight:400;color:#252423;">based on the country of origin?</div>
<div class="t" style="left:130.00px;top:417.20px;font-size:13.30px;line-height:18px;height:18px;letter-spacing:-0.151px;font-weight:400;color:#252423;">Here are some possible answers to these questions, using the</div>
<div class="t" style="left:130.00px;top:435.20px;font-size:13.30px;line-height:18px;height:18px;letter-spacing:-0.108px;font-weight:400;color:#252423;">data from the tables and visuals:</div>
<div style="left:138.2px;top:465.9px;width:5.0px;height:5.0px;background:#252423;border-radius:50%"></div>
<div class="t" style="left:151.40px;top:460.20px;font-size:13.30px;line-height:18px;height:18px;letter-spacing:0.085px;font-weight:400;color:#252423;">According to the table with the id</div>
<div style="left:351.4px;top:461.1px;width:16.6px;height:15.0px;background:#fff;border:1px solid #e1dfdd;border-radius:3px"></div><div class="t" style="left:357.34px;top:463.70px;font-size:8.50px;line-height:11px;height:11px;letter-spacing:0.000px;font-weight:400;color:#323130;">1</div>
<div class="t" style="left:369.30px;top:460.20px;font-size:13.30px;line-height:18px;height:18px;letter-spacing:-0.089px;font-weight:400;color:#252423;">, the most</div>
<div class="t" style="left:151.40px;top:478.10px;font-size:13.30px;line-height:18px;height:18px;letter-spacing:0.121px;font-weight:400;color:#252423;">popular primary interest for both returning and not</div>
<div class="t" style="left:151.40px;top:496.10px;font-size:13.30px;line-height:18px;height:18px;letter-spacing:-0.004px;font-weight:400;color:#252423;">returning customers is sport activities, followed by</div>
<div class="t" style="left:151.40px;top:514.00px;font-size:13.30px;line-height:18px;height:18px;letter-spacing:-0.124px;font-weight:400;color:#252423;">relaxation. Honeymoon and sightseeing are less</div>
<div class="t" style="left:151.40px;top:531.80px;font-size:13.30px;line-height:18px;height:18px;letter-spacing:-0.070px;font-weight:400;color:#252423;">common interests. The visual with the id</div>
<div style="left:389.4px;top:532.7px;width:17.3px;height:15.0px;background:#fff;border:1px solid #e1dfdd;border-radius:3px"></div><div class="t" style="left:395.69px;top:535.30px;font-size:8.50px;line-height:11px;height:11px;letter-spacing:0.000px;font-weight:400;color:#323130;">2</div>
<div class="t" style="left:411.10px;top:531.80px;font-size:13.30px;line-height:18px;height:18px;letter-spacing:-0.499px;font-weight:400;color:#252423;">shows</div>
<div class="t" style="left:151.40px;top:549.50px;font-size:13.30px;line-height:18px;height:18px;letter-spacing:-0.014px;font-weight:400;color:#252423;">that female customers tend to stay longer than male</div>
<div class="t" style="left:151.40px;top:567.60px;font-size:13.30px;line-height:18px;height:18px;letter-spacing:-0.109px;font-weight:400;color:#252423;">customers, regardless of their customer type.</div>
<div class="t" style="left:151.40px;top:585.30px;font-size:13.30px;line-height:18px;height:18px;letter-spacing:-0.141px;font-weight:400;color:#252423;">However, returning customers have a lower average</div>
<div class="t" style="left:151.40px;top:603.20px;font-size:13.30px;line-height:18px;height:18px;letter-spacing:0.053px;font-weight:400;color:#252423;">length of stay than not returning customers, for both</div>
<div class="t" style="left:151.40px;top:621.00px;font-size:13.30px;line-height:18px;height:18px;letter-spacing:-0.054px;font-weight:400;color:#252423;">genders. The table with the id</div>
<div style="left:328.5px;top:621.9px;width:17.5px;height:15.0px;background:#fff;border:1px solid #e1dfdd;border-radius:3px"></div><div class="t" style="left:334.89px;top:624.50px;font-size:8.50px;line-height:11px;height:11px;letter-spacing:0.000px;font-weight:400;color:#323130;">3</div>
<div class="t" style="left:350.30px;top:621.00px;font-size:13.30px;line-height:18px;height:18px;letter-spacing:-0.172px;font-weight:400;color:#252423;">shows that Oahu is</div>
<div class="t" style="left:151.40px;top:638.90px;font-size:13.30px;line-height:18px;height:18px;letter-spacing:-0.024px;font-weight:400;color:#252423;">the most visited island by both customer types,</div>
<div class="t" style="left:151.40px;top:656.60px;font-size:13.30px;line-height:18px;height:18px;letter-spacing:-0.163px;font-weight:400;color:#252423;">followed by Hawaii, Kauai, and Maui. Germany,</div>
<div class="t" style="left:151.40px;top:674.60px;font-size:13.30px;line-height:18px;height:18px;letter-spacing:-0.095px;font-weight:400;color:#252423;">Australia, and the United States are the top three</div>
<div class="t" style="left:151.40px;top:692.40px;font-size:13.30px;line-height:18px;height:18px;letter-spacing:-0.061px;font-weight:400;color:#252423;">countries for both customer types, while China,</div>
<div class="t" style="left:151.40px;top:710.60px;font-size:13.30px;line-height:18px;height:18px;letter-spacing:-0.096px;font-weight:400;color:#252423;">France, and the UK are among the bottom three.</div>
<div style="left:438.0px;top:711.5px;width:17.3px;height:15.0px;background:#fff;border:1px solid #e1dfdd;border-radius:3px"></div><div class="t" style="left:444.29px;top:714.10px;font-size:8.50px;line-height:11px;height:11px;letter-spacing:0.000px;font-weight:400;color:#323130;">1</div>
<div style="left:152.0px;top:729.5px;width:14.5px;height:2.0px;background:#fff;border-top:1px solid #e6e4e2;border-radius:3px 3px 0 0"></div>
<div style="left:170.0px;top:729.5px;width:15.5px;height:2.0px;background:#fff;border-top:1px solid #e6e4e2;border-radius:3px 3px 0 0"></div>
<div style="left:126.5px;top:731.5px;width:360.5px;height:17.3px;background:#fff;"></div>
<div class="t" style="left:129.70px;top:733.60px;font-size:9.60px;line-height:12px;height:12px;letter-spacing:0.023px;font-weight:400;color:#8a8886;">Created with AI. Inaccuracies are possible.</div>
<div class="t" style="left:316.30px;top:733.60px;font-size:9.60px;line-height:12px;height:12px;letter-spacing:-0.101px;font-weight:400;color:#117865;text-decoration:underline;text-decoration-thickness:.8px;text-underline-offset:1.5px">Read terms</div>
<div style="left:124.2px;top:260.1px;width:8.7px;height:3.4px;background:#8e8e8e;"></div>
<div style="left:124.2px;top:260.1px;width:3.0px;height:8.7px;background:#8e8e8e;"></div>
<div style="left:494.3px;top:260.1px;width:8.7px;height:3.4px;background:#8e8e8e;"></div>
<div style="left:500.0px;top:260.1px;width:3.0px;height:8.7px;background:#8e8e8e;"></div>
<div style="left:124.2px;top:747.6px;width:8.7px;height:3.4px;background:#8e8e8e;"></div>
<div style="left:124.2px;top:742.3px;width:3.0px;height:8.7px;background:#8e8e8e;"></div>
<div style="left:494.3px;top:747.6px;width:8.7px;height:3.4px;background:#8e8e8e;"></div>
<div style="left:500.0px;top:742.3px;width:3.0px;height:8.7px;background:#8e8e8e;"></div>
<div style="left:308.0px;top:260.1px;width:11.0px;height:3.2px;background:#8e8e8e;"></div>
<div style="left:308.0px;top:747.8px;width:11.0px;height:3.2px;background:#8e8e8e;"></div>
<div style="left:124.2px;top:500.0px;width:3.0px;height:11.0px;background:#8e8e8e;"></div>
<div style="left:500.0px;top:500.0px;width:3.0px;height:11.0px;background:#8e8e8e;"></div>
<div style="left:519.0px;top:261.3px;width:478.0px;height:348.6px;background:#fff;border-radius:3px;box-shadow:0 0 1.5px rgba(0,0,0,.55),0 1px 4px rgba(0,0,0,.32),0 3px 9px rgba(0,0,0,.16)"></div>
<div class="t" style="left:533.00px;top:281.80px;font-size:14.80px;line-height:20px;height:20px;letter-spacing:-0.446px;font-weight:700;color:#242424;">Create a narrative with Copilot</div>
<svg style="left:748.00px;top:284.80px" width="17.2" height="15.3" viewBox="0 0 17.2 15.3" ><path d="M2.21 2.54 Q2.70 0.40 4.90 0.40 L10.80 0.40 Q13.00 0.40 12.21 2.45 L9.79 8.75 Q9.00 10.80 6.80 10.80 L2.50 10.80 Q0.30 10.80 0.79 8.66Z" fill="none" stroke="#242424" stroke-width="1.15" stroke-linejoin="round"/><path d="M7.33 5.79 Q8.00 3.70 10.19 3.89 L14.81 4.31 Q17.00 4.50 16.35 6.60 L14.45 12.80 Q13.80 14.90 11.60 14.90 L6.60 14.90 Q4.40 14.90 5.07 12.81Z" fill="none" stroke="#242424" stroke-width="1.15" stroke-linejoin="round"/></svg>
<svg style="left:773.00px;top:289.50px" width="10.8" height="5.4" viewBox="0 0 10.8 5.4" ><path d="M0 0 L5.4 5.4 L10.8 0" fill="none" stroke="#424242" stroke-width="1" stroke-linecap="round" stroke-linejoin="round"/></svg>
<svg style="left:966.00px;top:285.50px" width="11" height="11" viewBox="0 0 11 11" ><path d="M1 1 L10 10 M10 1 L1 10" stroke="#242424" stroke-width="1.1" stroke-linecap="round"/></svg>
<div class="t" style="left:533.00px;top:321.00px;font-size:10.80px;line-height:14px;height:14px;letter-spacing:0.004px;font-weight:400;color:#323130;">Describe the summary you want and the visuals it should reference. AI generated content can</div>
<div class="t" style="left:533.00px;top:335.00px;font-size:10.80px;line-height:14px;height:14px;letter-spacing:-0.056px;font-weight:400;color:#323130;">contain mistakes, so review your summary carefully.</div>
<div class="t" style="left:783.00px;top:335.00px;font-size:10.80px;line-height:14px;height:14px;letter-spacing:-0.182px;font-weight:400;color:#117865;text-decoration:underline;text-decoration-thickness:.8px;text-underline-offset:1.5px">Read terms</div>
<div style="left:533.0px;top:360.0px;width:143.0px;height:23.6px;background:#fff;border:1px solid #117865;border-radius:6.5px"></div>
<div class="t" style="left:539.50px;top:365.10px;font-size:10.80px;line-height:14px;height:14px;letter-spacing:-0.130px;font-weight:400;color:#242424;">Give an executive summary</div>
<div style="left:683.0px;top:360.0px;width:203.0px;height:23.6px;background:#fff;border:1px solid #117865;border-radius:6.5px"></div>
<div class="t" style="left:689.50px;top:365.10px;font-size:10.80px;line-height:14px;height:14px;letter-spacing:0.008px;font-weight:400;color:#242424;">Answer likely questions from leadership</div>
<div style="left:533.0px;top:390.8px;width:163.0px;height:23.4px;background:#fff;border:1px solid #117865;border-radius:6.5px"></div>
<div class="t" style="left:539.50px;top:395.80px;font-size:10.80px;line-height:14px;height:14px;letter-spacing:-0.002px;font-weight:400;color:#242424;">Create a bulleted list of insights</div>
<div style="left:532.4px;top:427.9px;width:450.3px;height:125.1px;background:#fff;border:1px solid #c2c0be;border-radius:9px"></div>
<div class="t" style="left:546.00px;top:442.60px;font-size:12.80px;line-height:17px;height:17px;letter-spacing:-0.169px;font-weight:400;color:#242424;">Based on the data, what questions are likely to be asked by leadership?</div>
<div class="t" style="left:546.00px;top:460.70px;font-size:12.80px;line-height:17px;height:17px;letter-spacing:-0.237px;font-weight:400;color:#242424;">Answer these questions.</div>
<div class="t" style="left:544.00px;top:525.00px;font-size:8.80px;line-height:11px;height:11px;letter-spacing:0.181px;font-weight:400;color:#424242;">95/300</div>
<div class="t" style="left:533.00px;top:574.60px;font-size:10.80px;line-height:14px;height:14px;letter-spacing:-0.284px;font-weight:400;color:#242424;">Reference visuals</div>
<svg style="left:620.20px;top:572.80px" width="15" height="15" viewBox="0 0 15 15" ><circle cx="7.5" cy="7.5" r="6.3" fill="none" stroke="#117865" stroke-width="1.1"/><path d="M7.5 6.6 V11" stroke="#117865" stroke-width="1.2" stroke-linecap="round"/><circle cx="7.5" cy="4.5" r=".8" fill="#117865"/></svg>
<div style="left:644.4px;top:569.1px;width:94.7px;height:23.4px;background:#fff;border:1px solid #d1d1d1;border-radius:4px"></div>
<div class="t" style="left:656.00px;top:574.60px;font-size:10.80px;line-height:14px;height:14px;letter-spacing:-0.028px;font-weight:400;color:#242424;">Current page</div>
<svg style="left:724.60px;top:579.80px" width="8.4" height="4.4" viewBox="0 0 8.4 4.4" ><path d="M0 0 L4.2 4.4 L8.4 0" fill="none" stroke="#424242" stroke-width="1.1" stroke-linecap="round" stroke-linejoin="round"/></svg>
<div style="left:929.0px;top:566.0px;width:53.2px;height:29.0px;background:#117865;border-radius:4px"></div>
<div class="t" style="left:937.10px;top:573.90px;font-size:12.60px;line-height:16px;height:16px;letter-spacing:-0.370px;font-weight:700;color:#fff;">Create</div>
<svg style="left:1348.80px;top:96.00px" width="6.4" height="7" viewBox="0 0 6.4 7" ><path d="M2.9 0.5 L0.5 3.5 L2.9 6.5 M5.8 0.5 L3.4 3.5 L5.8 6.5" fill="none" stroke="#252423" stroke-width="1.3" stroke-linecap="round" stroke-linejoin="round"/></svg>
<svg style="left:1378.80px;top:96.50px" width="6.4" height="7" viewBox="0 0 6.4 7" ><path d="M2.9 0.5 L0.5 3.5 L2.9 6.5 M5.8 0.5 L3.4 3.5 L5.8 6.5" fill="none" stroke="#252423" stroke-width="1.3" stroke-linecap="round" stroke-linejoin="round"/></svg>
<svg style="left:1408.80px;top:96.50px" width="6.4" height="7" viewBox="0 0 6.4 7" ><path d="M2.9 0.5 L0.5 3.5 L2.9 6.5 M5.8 0.5 L3.4 3.5 L5.8 6.5" fill="none" stroke="#252423" stroke-width="1.3" stroke-linecap="round" stroke-linejoin="round"/></svg>
<div style="left:1355.6px;top:121.4px;width:1.3px;height:7.2px;background:#252423;"></div>
<div style="left:1352.8px;top:122.6px;width:1.3px;height:4.8px;background:#252423;"></div>
<div style="left:1350.1px;top:123.8px;width:1.2px;height:2.4px;background:#252423;"></div>
<div class="t" style="left:1352.3px;top:138.0px;font-size:14.5px;line-height:18px;height:18px;letter-spacing:-0.067px;color:#252423;transform-origin:0 0;transform:rotate(90deg) translate(0,-50%)">Filters</div>
<div class="t" style="left:1380.3px;top:118.3px;font-size:14.5px;line-height:18px;height:18px;letter-spacing:0.043px;color:#252423;transform-origin:0 0;transform:rotate(90deg) translate(0,-50%)">Visualizations</div>
<div class="t" style="left:1410.5px;top:118.4px;font-size:14.5px;line-height:18px;height:18px;letter-spacing:-0.157px;color:#252423;transform-origin:0 0;transform:rotate(90deg) translate(0,-50%)">Data</div>
<svg style="left:74.00px;top:822.00px" width="24" height="24" viewBox="0 0 24 24" ><rect x="4.6" y="2.8" width="12.6" height="9" rx="1.2" fill="#117865"/><rect x="2.4" y="12.8" width="17.2" height="1.3" rx=".6" fill="#117865"/><rect x=".4" y="20.2" width="21.4" height="2.2" rx="1.1" fill="#117865"/></svg>
<svg style="left:119.00px;top:822.00px" width="12" height="18" viewBox="0 0 12 18" ><rect x="1" y=".6" width="9.6" height="16.6" rx="1.8" fill="none" stroke="#424242" stroke-width="1.2"/><path d="M4.4 14.2 H7.4" stroke="#424242" stroke-width="1.1" stroke-linecap="round"/></svg>
<svg style="left:149.50px;top:828.00px" width="5" height="8" viewBox="0 0 5 8" ><path d="M4.5 .6 L.8 4 L4.5 7.4Z" fill="none" stroke="#c8c6c4" stroke-width=".9" stroke-linejoin="round"/></svg>
<svg style="left:169.00px;top:828.00px" width="5" height="8" viewBox="0 0 5 8" ><path d="M.5 .6 L4.2 4 L.5 7.4Z" fill="none" stroke="#c8c6c4" stroke-width=".9" stroke-linejoin="round"/></svg>
<div style="left:180.5px;top:816.0px;width:171.7px;height:32.0px;background:#fff;"></div>
<div style="left:180.5px;top:844.0px;width:171.7px;height:4.0px;background:#117865;"></div>
<div class="t" style="left:199.50px;top:825.50px;font-size:11.80px;line-height:15px;height:15px;letter-spacing:-0.482px;font-weight:400;color:#252423;-webkit-text-stroke:.45px #252423">Analysis of Customer Types</div>
<div style="left:352.2px;top:816.0px;width:253.8px;height:32.0px;background:#fff;border-left:1px solid #e1dfdd"></div>
<div class="t" style="left:370.50px;top:825.50px;font-size:11.30px;line-height:15px;height:15px;letter-spacing:-0.361px;font-weight:400;color:#252423;">Monitoring Transactions, Cases, and Resour...</div>
<div style="left:606.0px;top:816.0px;width:255.0px;height:32.0px;background:#fff;border-left:1px solid #e1dfdd"></div>
<div class="t" style="left:625.00px;top:825.50px;font-size:11.30px;line-height:15px;height:15px;letter-spacing:-0.386px;font-weight:400;color:#252423;">Comparing Revenue, Customer Satisfaction,...</div>
<div style="left:861.0px;top:816.0px;width:35.5px;height:32.0px;background:#117865;"></div>
<div style="left:873.5px;top:831.0px;width:10.0px;height:2.0px;background:#fff;"></div>
<div style="left:877.5px;top:827.0px;width:2.0px;height:10.0px;background:#fff;"></div>
<div class="t" style="left:69.40px;top:853.30px;font-size:11.00px;line-height:14px;height:14px;letter-spacing:-0.333px;font-weight:400;color:#323130;">Page 1 of 3</div>
<div style="left:1234.8px;top:858.2px;width:4.2px;height:1.8px;background:#484644;"></div>
<div style="left:1243.0px;top:858.7px;width:90.8px;height:1.2px;background:#605e5c;"></div>
<div style="left:1288.0px;top:853.8px;width:3.6px;height:10.6px;background:#605e5c;"></div>
<div style="left:1339.0px;top:858.4px;width:6.4px;height:1.8px;background:#484644;"></div>
<div style="left:1341.3px;top:856.1px;width:1.8px;height:6.4px;background:#484644;"></div>
<div class="t" style="left:1358.00px;top:852.60px;font-size:11.00px;line-height:14px;height:14px;letter-spacing:-0.329px;font-weight:400;color:#484644;">110%</div>
<svg style="left:1396.00px;top:853.50px" width="14" height="11" viewBox="0 0 14 11" ><rect x=".8" y="1.4" width="12.4" height="8.2" rx="1" fill="none" stroke="#323130" stroke-width="1.1"/><path d="M3 4.8 V3.6 H4.6 M9.4 3.6 H11 V4.8 M11 6.2 V7.4 H9.4 M4.6 7.4 H3 V6.2" fill="none" stroke="#323130" stroke-width=".9"/></svg>
</body></html>
